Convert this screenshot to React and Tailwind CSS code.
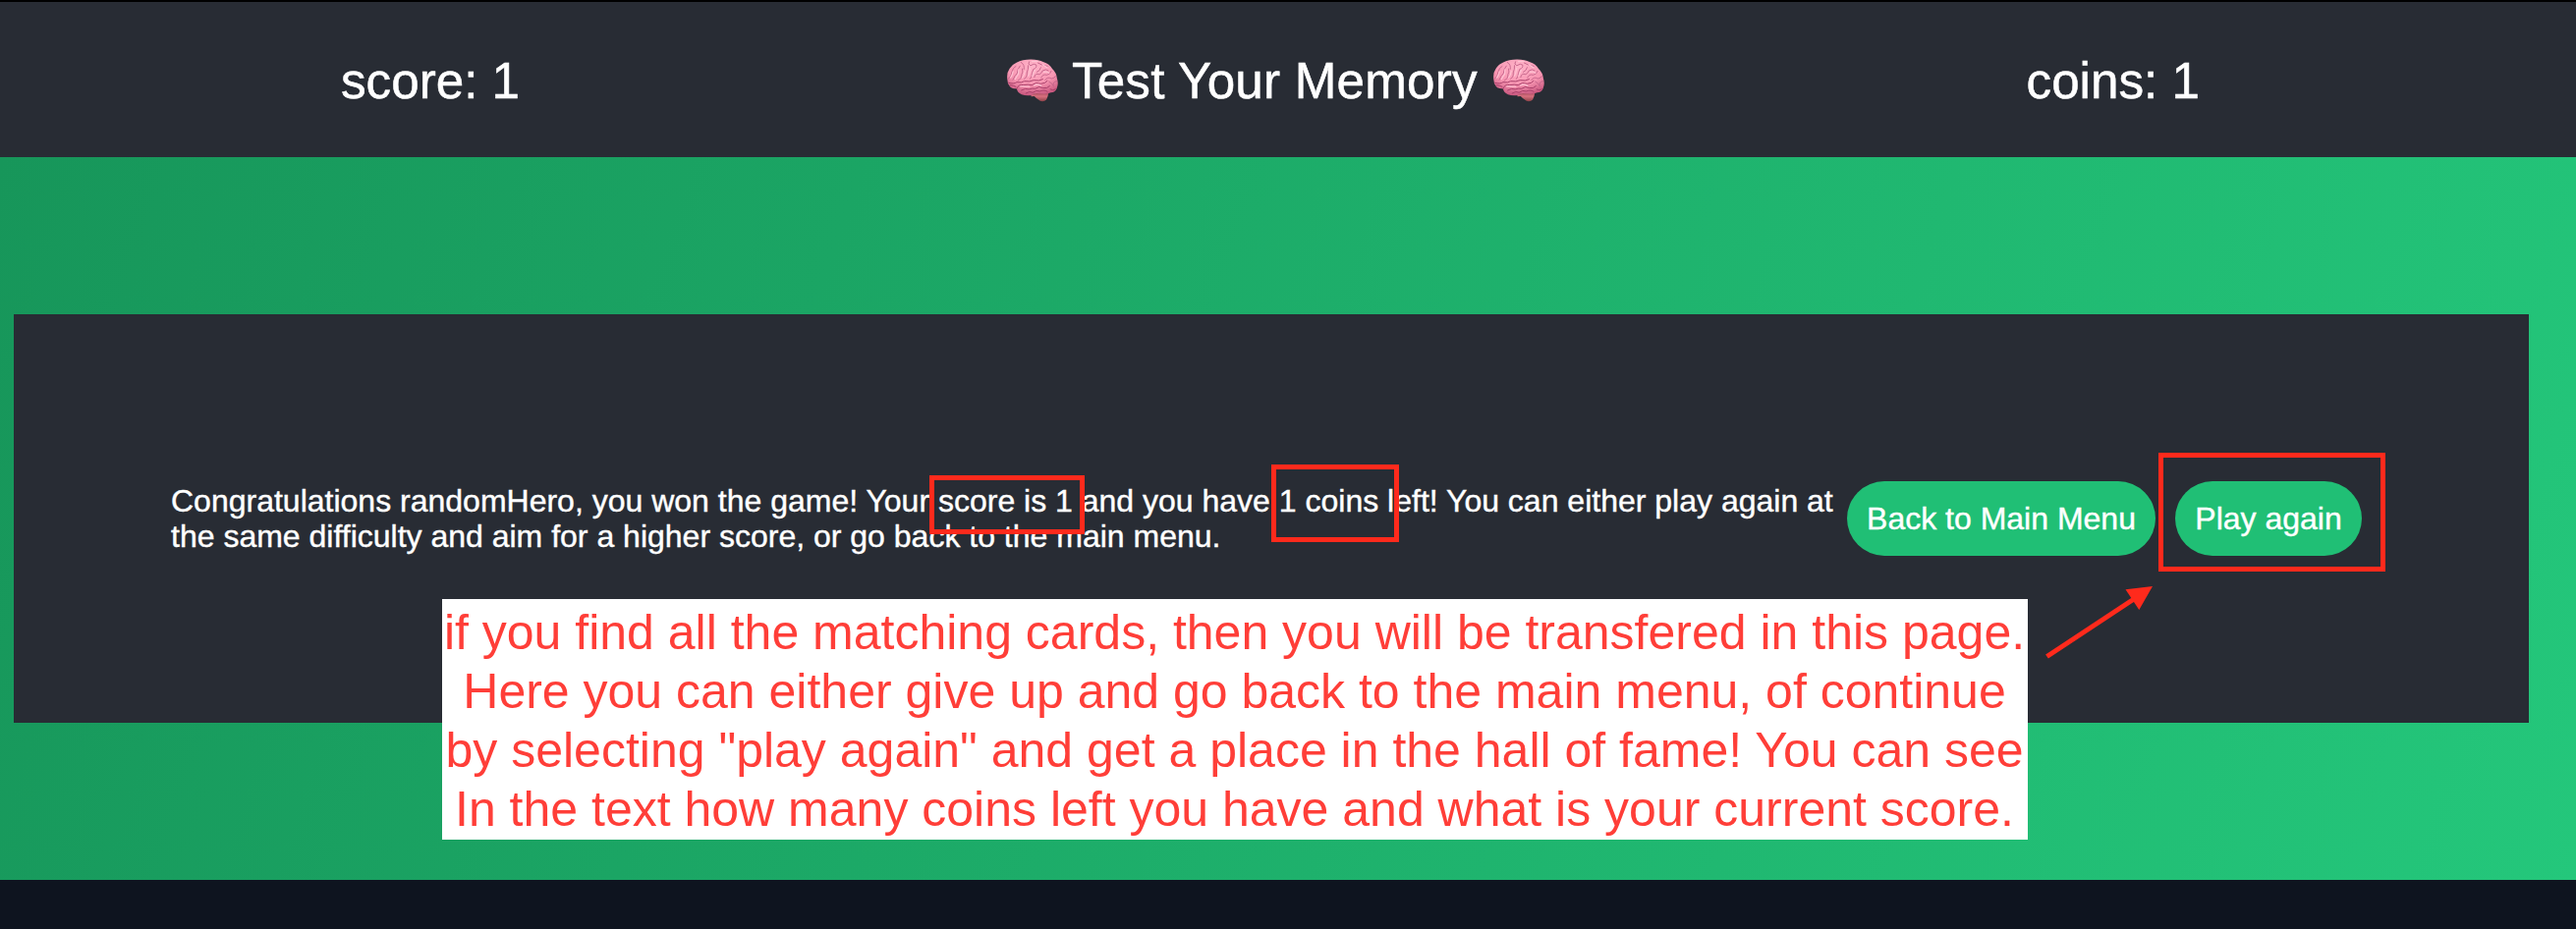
function Brain() {
  return (
    <svg className="h-[44px] w-[52px] shrink-0" viewBox="27 27 157 132" fill="none">
      <defs>
        <radialGradient id="lobe" cx="0.5" cy="0.2" r="0.8">
          <stop offset="0" stopColor="#ffb3c8" />
          <stop offset="0.6" stopColor="#f796b2" />
          <stop offset="1" stopColor="#c9587f" />
        </radialGradient>
        <linearGradient id="stem" x1="0" y1="0" x2="0" y2="1">
          <stop offset="0" stopColor="#8f3c50" />
          <stop offset="0.5" stopColor="#d9707f" />
          <stop offset="1" stopColor="#8f4349" />
        </linearGradient>
      </defs>
      <path d="M101 135 L112 132 L156 126 Q153 142 148 152 Q141 159 129 156 Q117 148 111 141 L101 142Z" fill="url(#stem)" />
      <path
        d="M28 90 Q25 70 35 56 Q42 44 56 38 Q75 28 100 28 Q125 28 138 36 Q158 42 166 57 Q179 69 181 88 Q186 103 180 117 Q176 129 162 130 Q148 137 127 133 Q112 130 102 138 Q86 141 72 136 Q58 130 57 118 Q42 119 35 110 Q28 102 28 90Z"
        fill="url(#lobe)"
      />
      <path
        d="M31 88 Q41 80 42 66 Q45 53 54 49 M45 91 Q50 78 58 71 Q59 57 67 48 M61 93 Q72 88 72 74 Q77 68 74 57 M80 88 Q90 82 88 69 Q93 58 92 47 M70 37 Q82 44 79 58 M95 35 Q89 43 99 47 Q111 39 117 45 Q119 55 108 58 L104 70 Q104 80 98 88 M122 39 Q137 48 151 49 M119 67 Q129 63 131 53 M111 83 Q113 69 126 74 Q132 73 136 63 Q147 56 154 62 M132 84 Q137 72 149 76 Q161 74 163 64 M144 92 Q151 80 164 87 Q173 86 176 80 M156 96 Q165 99 171 112 M180 95 Q166 96 170 108"
        stroke="#c4648a"
        strokeWidth="2.8"
        strokeLinecap="round"
      />
      <path
        d="M32 100 Q48 105 57 98 Q72 101 80 95 Q97 98 109 92 Q126 96 137 89 M57 118 Q62 103 78 107 Q92 104 103 107 Q116 96 131 103 Q145 102 151 94 M71 123 Q84 115 94 120 Q106 116 114 118 Q126 108 138 116 Q150 119 158 110 M85 132 Q97 124 106 130 Q117 121 128 126 Q143 120 151 127 M36 107 Q47 108 54 112 M160 120 Q168 125 176 120"
        stroke="#a83f6a"
        strokeWidth="3"
        strokeLinecap="round"
      />
      <path
        d="M46 65 Q43 78 38 84 M63 59 L62 73 Q56 81 52 89 M82 64 Q81 76 74 84 M98 55 Q97 70 92 79 M104 34 L122 34 M136 44 L150 53 M113 61 Q107 71 105 80 M140 67 Q151 64 156 70 M68 111 Q81 110 96 112 M110 108 Q122 102 132 109"
        stroke="#ffc4d4"
        strokeWidth="3.5"
        strokeLinecap="round"
      />
    </svg>
  );
}

const noteLines = [
  'if you find all the matching cards, then you will be transfered in this page.',
  'Here you can either give up and go back to the main menu, of continue',
  'by selecting "play again" and get a place in the hall of fame! You can see',
  'In the text how many coins left you have and what is your current score.',
];

function Header() {
  return (
    <header className="flex h-[160px] items-center justify-between border-t-2 border-black bg-[#282c34] pt-[2px] pr-[383px] pl-[347px] text-[51.2px] leading-none text-white [-webkit-text-stroke:0.5px_white]">
      <div className="pt-px whitespace-nowrap">score: 1</div>
      <h1 className="ml-[5px] flex items-center gap-[14px] whitespace-nowrap">
        <Brain />
        <span className="pt-px pr-[2px] tracking-[0.2px]">Test Your Memory</span>
        <Brain />
      </h1>
      <div className="pt-px whitespace-nowrap">coins: 1</div>
    </header>
  );
}

function PillButton({ children, className }) {
  return (
    <button className={`h-[76px] shrink-0 rounded-full bg-[#20bf75] text-center whitespace-nowrap text-white ${className}`}>
      {children}
    </button>
  );
}

function Annotations() {
  return (
    <>
      <div className="absolute top-[484px] left-[946px] h-[60px] w-[158px] border-[5px] border-[#ff2a1c]" />
      <div className="absolute top-[473px] left-[1294px] h-[79px] w-[130px] border-[5px] border-[#ff2a1c]" />
      <div className="absolute top-[461px] left-[2197px] h-[121px] w-[231px] border-[5px] border-[#ff2a1c]" />
      <svg className="absolute top-[590px] left-[2076px] h-[84px] w-[122px]" viewBox="2076 590 122 84">
        <path d="M2083.5 668.5 L2172 610" stroke="#ff2a1c" strokeWidth="5" />
        <path d="M2191 597 L2163.5 600.3 L2177.3 621Z" fill="#ff2a1c" />
      </svg>
      <div className="absolute top-[610px] left-[450px] h-[245px] w-[1614px] bg-white pt-[4px] pr-px text-center text-[50px] leading-[60px] text-[#ff3e38]">
        {noteLines.map((line) => (
          <div key={line} className="whitespace-nowrap">
            {line}
          </div>
        ))}
      </div>
    </>
  );
}

export default function App() {
  return (
    <div className="relative h-[946px] w-[2622px] overflow-hidden bg-[#0e141f] font-['Liberation_Sans',Arial,sans-serif]">
      <Header />
      <main className="h-[736px] bg-[linear-gradient(109deg,#17965a,#24c77b)] pt-[160px] pr-[48px] pl-[14px]">
        <section className="flex h-[416px] items-center bg-[#282c34] px-[160px] text-[32px] leading-[36.5px] text-white [-webkit-text-stroke:0.4px_white]">
          <p className="flex-1">
            Congratulations randomHero, you won the game! Your score is 1 and you have 1 coins left! You can either play
            again at the same difficulty and aim for a higher score, or go back to the main menu.
          </p>
          <PillButton className="mx-[10px] w-[314px]">Back to Main Menu</PillButton>
          <PillButton className="mx-[10px] w-[190px]">Play again</PillButton>
        </section>
      </main>
      <Annotations />
    </div>
  );
}
